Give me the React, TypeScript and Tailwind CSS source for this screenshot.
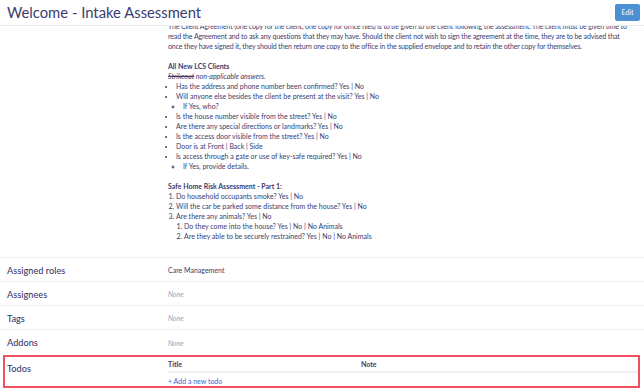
import React from 'react';

const navy = 'text-[#3b3b6d]';

const Row: React.FC<{ label: string; children: React.ReactNode; last?: boolean }> = ({ label, children, last }) => (
  <div className={`flex h-[24px] items-center ${last ? '' : 'border-b border-[#f1f1f3]'}`}>
    <div className={`w-[168px] pl-[7px] pt-[2px] text-[9.2px] font-medium ${navy}`}>{label}</div>
    <div className="flex-1 pt-[2px] text-[7px]">{children}</div>
  </div>
);

const None = () => <span className="italic text-[#a0a0b4]">None</span>;

export default function App() {
  return (
    <div className="w-[644px] h-[390px] overflow-hidden bg-white" style={{ fontFamily: 'Lato, "Noto Sans", sans-serif' }}>
      <div className="flex h-[26px] items-center justify-between border-b border-[#ececf0] pl-[7px] pr-[4px]">
        <h1 className={`text-[14.8px] leading-none ${navy}`}>Welcome - Intake Assessment</h1>
        <button className="h-[17px] w-[25px] rounded-[2px] bg-[#4a90d2] text-[7px] text-white">Edit</button>
      </div>

      <div className="h-[232px] overflow-hidden border-b border-[#f1f1f3]">
        <div className={`-mt-[5px] ml-[168px] mr-[4px] text-[7px] leading-[10px] ${navy}`}>
          <p className="tracking-[-0.12px]">
            The Client Agreement (one copy for the client, one copy for office files) is to be given to the client following the assessment. The client must be given time to read the Agreement and to ask any questions that they may have. Should the client not wish to sign the agreement at the time, they are to be advised that
            <br />
            once they have signed it, they should then return one copy to the office in the supplied envelope and to retain the other copy for themselves.
          </p>

          <p className="mt-[10px] font-bold">All New LCS Clients</p>
          <p className="italic">
            <span className="line-through">Strikeout</span> non-applicable answers.
          </p>
          <ul className="list-disc pl-[8px]">
            <li>Has the address and phone number been confirmed? Yes | No</li>
            <li>
              Will anyone else besides the client be present at the visit? Yes | No
              <ul className="list-[circle] pl-[7px]">
                <li>If Yes, who?</li>
              </ul>
            </li>
            <li>Is the house number visible from the street? Yes | No</li>
            <li>Are there any special directions or landmarks? Yes | No</li>
            <li>Is the access door visible from the street? Yes | No</li>
            <li>Door is at Front | Back | Side</li>
            <li>
              Is access through a gate or use of key-safe required? Yes | No
              <ul className="list-[circle] pl-[7px]">
                <li>If Yes, provide details.</li>
              </ul>
            </li>
          </ul>

          <p className="mt-[10px] font-bold">Safe Home Risk Assessment - Part 1:</p>
          <ol className="list-decimal pl-[8px]">
            <li>Do household occupants smoke? Yes | No</li>
            <li>Will the car be parked some distance from the house? Yes | No</li>
            <li>
              Are there any animals? Yes | No
              <ol className="list-decimal pl-[8px]">
                <li>Do they come into the house? Yes | No | No Animals</li>
                <li>Are they able to be securely restrained? Yes | No | No Animals</li>
              </ol>
            </li>
          </ol>
        </div>
      </div>

      <Row label="Assigned roles">
        <span className={navy}>Care Management</span>
      </Row>
      <Row label="Assignees">
        <None />
      </Row>
      <Row label="Tags">
        <None />
      </Row>
      <Row label="Addons" last>
        <None />
      </Row>

      <div className="mx-[3px] mt-[1px] flex h-[33px] w-[637px] border-2 border-[#f0505f]">
        <div className={`w-[163px] pl-[2px] pt-[5px] text-[9.2px] font-medium ${navy}`}>Todos</div>
        <div className="flex-1 text-[7px]">
          <div className={`flex h-[16px] items-center border-b-2 border-[#efeff1] font-bold ${navy}`}>
            <span className="w-[193px]">Title</span>
            <span>Note</span>
          </div>
          <div className="pt-[3px] text-[#3f66d8]">+ Add a new todo</div>
        </div>
      </div>
    </div>
  );
}
